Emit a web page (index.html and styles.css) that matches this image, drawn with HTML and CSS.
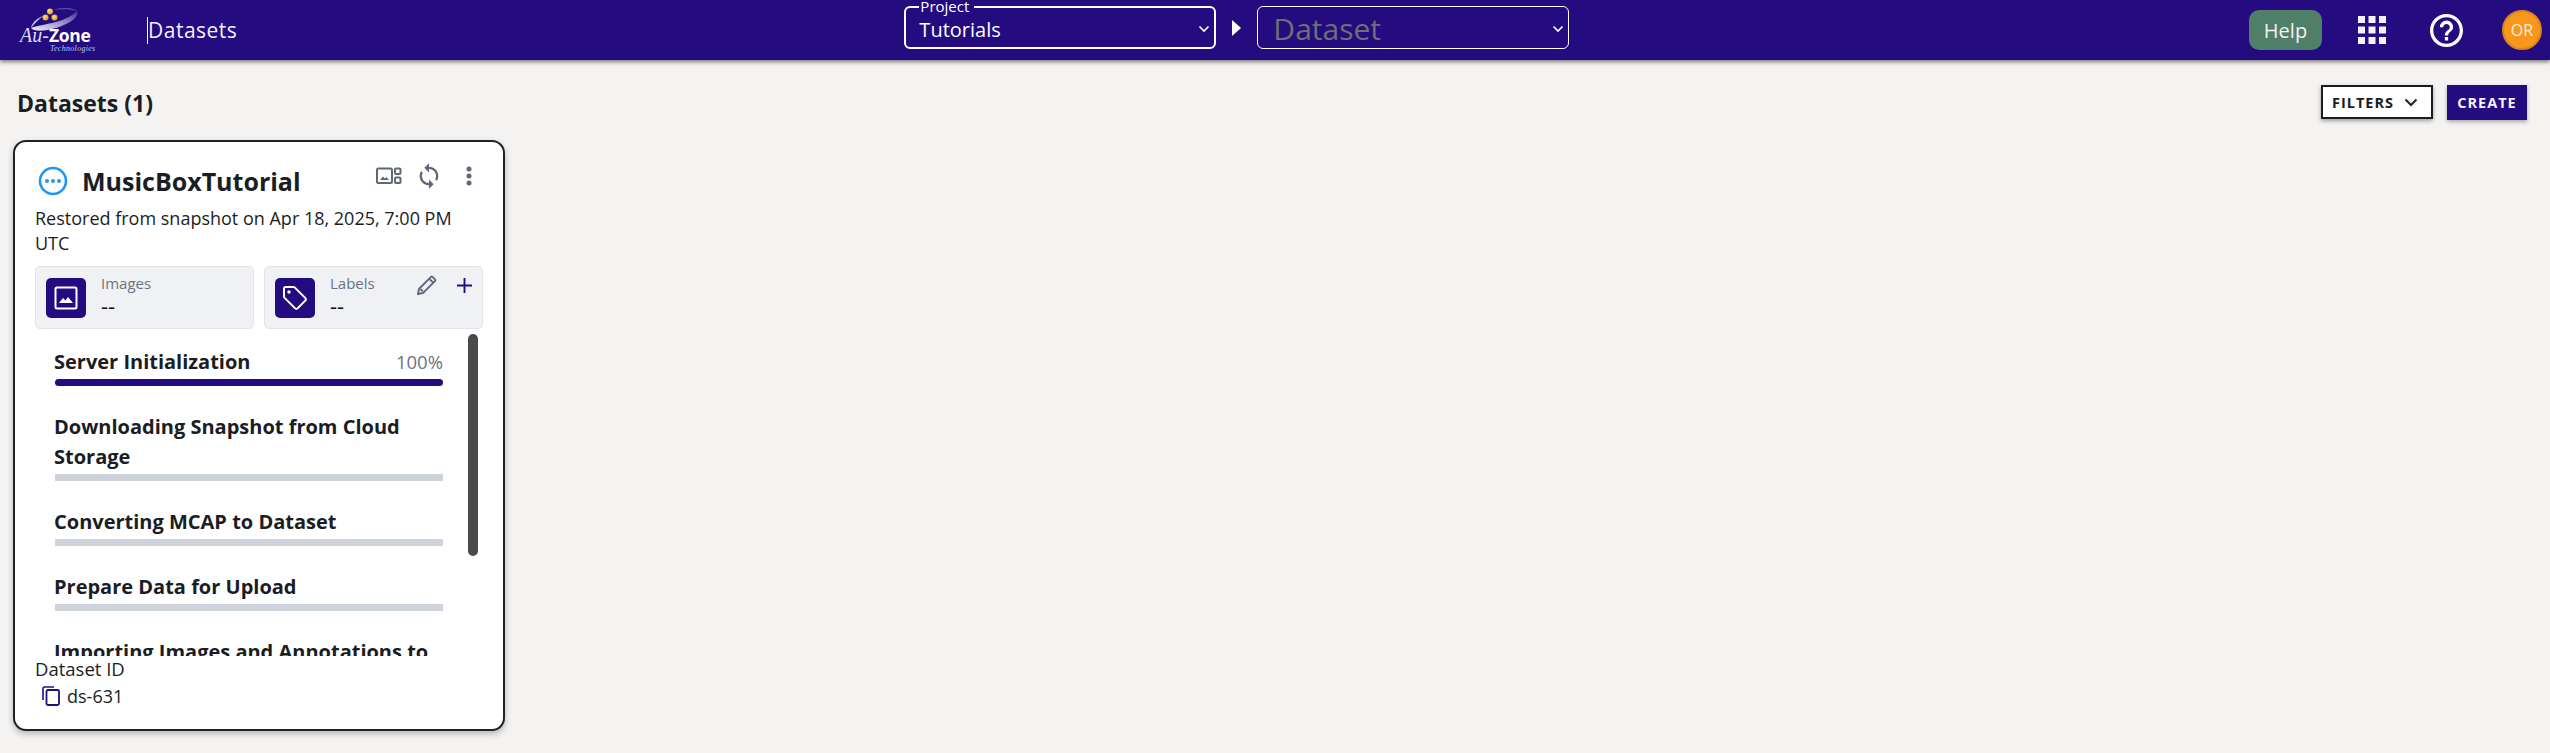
FILE: index.html
```html
<!DOCTYPE html>
<html lang="en">
<head>
<meta charset="utf-8">
<title>Datasets</title>
<link rel="stylesheet" href="styles.css">
</head>
<body>
<header class="topbar">
  <div class="brand">
    <svg class="swoosh" width="56" height="28" viewBox="0 0 56 28">
      <defs>
        <linearGradient id="sw" x1="0" y1="1" x2="1" y2="0">
          <stop offset="0" stop-color="#f0eef8"/>
          <stop offset="0.6" stop-color="#8f86c4"/>
          <stop offset="1" stop-color="#3f2d94"/>
        </linearGradient>
        <radialGradient id="ball" cx="0.4" cy="0.35" r="0.7">
          <stop offset="0" stop-color="#ffe27a"/>
          <stop offset="1" stop-color="#d99a12"/>
        </radialGradient>
      </defs>
      <path d="M1 20C10 16 34 16 47 3C50 8 40 16 26 20C16 23 4 24 1 20Z" fill="url(#sw)"/>
      <path d="M1 20C2 14 8 10 13 8C8 12 4 16 1 20Z" fill="#cfcbe6"/>
      <path d="M24 2C30 -1 42 -1 47 3C40 1 32 1 24 2Z" fill="#5a4aa6"/>
      <circle cx="20" cy="3.500" r="3" fill="url(#ball)"/>
      <circle cx="15.500" cy="9.500" r="3" fill="url(#ball)"/>
      <circle cx="24.500" cy="9.500" r="3" fill="url(#ball)"/>
    </svg>
    <div class="logo-word"><span class="logo-au">Au-</span><span class="logo-zone">Zone</span></div>
    <div class="logo-tech">Technologies</div>
  </div>
  <div class="page-name">Datasets</div>
  <nav class="crumbs">
    <div class="picker picker-project">
      <span class="picker-legend">Project</span>
      <span class="picker-value">Tutorials</span>
      <svg class="chev" width="12" height="8" viewBox="0 0 12 8"><path d="M1.500 1.500L6 6l4.500-4.500" fill="none" stroke="#fff" stroke-width="1.600"/></svg>
    </div>
    <svg class="crumb-arrow" width="9" height="16" viewBox="0 0 9 16"><path d="M0 0l9 8-9 8z" fill="#fff"/></svg>
    <div class="picker picker-dataset">
      <span class="picker-placeholder">Dataset</span>
      <svg class="chev" width="12" height="8" viewBox="0 0 12 8"><path d="M1.500 1.500L6 6l4.500-4.500" fill="none" stroke="#fff" stroke-width="1.600"/></svg>
    </div>
  </nav>
  <div class="top-actions">
    <button class="help">Help</button>
    <svg class="apps" width="28" height="28" viewBox="0 0 28 28" fill="#f4f2fb">
      <rect x="0" y="0" width="7" height="7"/><rect x="10.500" y="0" width="7" height="7"/><rect x="21" y="0" width="7" height="7"/>
      <rect x="0" y="10.500" width="7" height="7"/><rect x="10.500" y="10.500" width="7" height="7"/><rect x="21" y="10.500" width="7" height="7"/>
      <rect x="0" y="21" width="7" height="7"/><rect x="10.500" y="21" width="7" height="7"/><rect x="21" y="21" width="7" height="7"/>
    </svg>
    <svg class="question" width="33" height="33" viewBox="2 2 20 20"><path fill="#fff" d="M11 18h2v-2h-2v2zm1-16C6.480 2 2 6.480 2 12s4.480 10 10 10 10-4.480 10-10S17.520 2 12 2zm0 18c-4.410 0-8-3.590-8-8s3.590-8 8-8 8 3.590 8 8-3.590 8-8 8zm0-14c-2.210 0-4 1.790-4 4h2c0-1.100.9-2 2-2s2 .9 2 2c0 2-3 1.750-3 5h2c0-2.250 3-2.500 3-5 0-2.210-1.790-4-4-4z"/></svg>
    <div class="avatar">OR</div>
  </div>
</header>

<main class="content">
  <div class="toolbar">
    <h1 class="heading">Datasets (1)</h1>
    <div class="toolbar-actions">
      <button class="btn-filters">FILTERS
        <svg width="14" height="9" viewBox="0 0 14 9"><path d="M1.500 1.500L7 7l5.500-5.500" fill="none" stroke="#1f2328" stroke-width="2"/></svg>
      </button>
      <button class="btn-create">CREATE</button>
    </div>
  </div>

  <article class="card">
    <div class="card-head">
      <svg class="status" width="30" height="30" viewBox="0 0 30 30">
        <circle cx="15" cy="15" r="13" fill="none" stroke="#2196f3" stroke-width="2.600"/>
        <circle cx="9" cy="15" r="2" fill="#2196f3"/><circle cx="15" cy="15" r="2" fill="#2196f3"/><circle cx="21" cy="15" r="2" fill="#2196f3"/>
      </svg>
      <h2 class="card-title">MusicBoxTutorial</h2>
      <div class="card-tools">
        <svg width="26" height="18" viewBox="0 0 26 18" fill="none">
          <rect x="1" y="1.500" width="15" height="14.500" rx="1.500" stroke="#5f6779" stroke-width="2"/>
          <path d="M4 13l3-3.500 2 2 1.500-1.500 2.500 3z" fill="#5f6779"/>
          <rect x="19" y="1.500" width="5.500" height="5.500" rx="1" stroke="#5f6779" stroke-width="2"/>
          <rect x="19" y="10.500" width="5.500" height="5.500" rx="1" stroke="#5f6779" stroke-width="2"/>
        </svg>
        <svg width="28" height="28" viewBox="0 0 24 24"><path fill="#5f6779" d="M12 4V1L8 5l4 4V6c3.310 0 6 2.690 6 6 0 1.010-.25 1.970-.7 2.800l1.460 1.460C19.540 15.030 20 13.570 20 12c0-4.420-3.580-8-8-8zm0 14c-3.310 0-6-2.690-6-6 0-1.010.25-1.970.7-2.800L5.240 7.740C4.460 8.970 4 10.430 4 12c0 4.420 3.580 8 8 8v3l4-4-4-4v3z"/></svg>
        <svg class="tool-more" width="6" height="20" viewBox="0 0 6 20" fill="#5f6779"><circle cx="3" cy="3" r="2.500"/><circle cx="3" cy="10" r="2.500"/><circle cx="3" cy="17" r="2.500"/></svg>
      </div>
    </div>
    <p class="card-desc">Restored from snapshot on Apr 18, 2025, 7:00 PM UTC</p>
    <div class="stats">
      <div class="stat">
        <div class="stat-icon">
          <svg width="24" height="24" viewBox="0 0 24 24" fill="none"><rect x="1.500" y="1.500" width="21" height="21" rx="1.500" stroke="#fff" stroke-width="2"/><path d="M5 17l4-5 2.500 2.500L14 11l5 6z" fill="#fff"/></svg>
        </div>
        <div class="stat-text"><span class="stat-label">Images</span><span class="stat-value">--</span></div>
      </div>
      <div class="stat">
        <div class="stat-icon">
          <svg width="26" height="26" viewBox="0 0 26 26" fill="none"><path d="M2 3.500C2 2.700 2.700 2 3.500 2h8c.6 0 1 .2 1.400.6l10.500 10.500c.7.7.7 1.700 0 2.400l-7.900 7.900c-.7.7-1.700.7-2.400 0L2.600 12.900C2.200 12.500 2 12.100 2 11.500z" stroke="#fff" stroke-width="2"/><circle cx="7" cy="7" r="1.700" fill="#fff"/></svg>
        </div>
        <div class="stat-text"><span class="stat-label">Labels</span><span class="stat-value">--</span></div>
        <div class="stat-tools">
          <svg width="20" height="20" viewBox="0 0 21 21"><path d="M1 20l1.200-5.500L14.500 2.200c.6-.6 1.500-.6 2.100 0l2.200 2.200c.6.6.6 1.500 0 2.100L6.500 18.800zM3.800 15l2.200 2.200M13 4l4 4" fill="none" stroke="#5f6779" stroke-width="2"/></svg>
          <svg width="15" height="15" viewBox="0 0 16 16"><path d="M8 0v16M0 8h16" stroke="#240b80" stroke-width="2"/></svg>
        </div>
      </div>
    </div>
    <div class="steps-wrap">
      <div class="steps">
        <div class="step">
          <div class="step-row"><span class="step-name">Server Initialization</span><span class="step-pct">100%</span></div>
          <div class="bar bar-done"></div>
        </div>
        <div class="step">
          <div class="step-row"><span class="step-name">Downloading Snapshot from Cloud Storage</span></div>
          <div class="bar"></div>
        </div>
        <div class="step">
          <div class="step-row"><span class="step-name">Converting MCAP to Dataset</span></div>
          <div class="bar"></div>
        </div>
        <div class="step">
          <div class="step-row"><span class="step-name">Prepare Data for Upload</span></div>
          <div class="bar"></div>
        </div>
        <div class="step">
          <div class="step-row"><span class="step-name">Importing Images and Annotations to Dataset</span></div>
          <div class="bar"></div>
        </div>
      </div>
      <div class="thumb"></div>
    </div>
    <div class="card-foot">
      <div class="foot-label">Dataset ID</div>
      <div class="foot-id">
        <svg width="18" height="20" viewBox="0 0 18 20" fill="none"><path d="M1 14V2.500C1 1.700 1.700 1 2.500 1H12" stroke="#240b80" stroke-width="1.600"/><rect x="4.500" y="4" width="12.500" height="15" rx="1.500" stroke="#240b80" stroke-width="1.800"/></svg>
        <span>ds-631</span>
      </div>
    </div>
  </article>
</main>
</body>
</html>
```
FILE: styles.css
```css
* { box-sizing: border-box; }
html, body { margin: 0; height: 100%; }
body {
  background: #f4f3f1;
  font-family: "Open Sans", sans-serif;
  color: #1a1d24;
  overflow: hidden;
}
.topbar {
  height: 60px;
  background: #240b80;
  box-shadow: 0 2px 4px rgba(0, 0, 0, 0.5);
  display: flex;
  align-items: center;
  position: relative;
  color: #fff;
}
.brand {
  width: 147px;
  height: 60px;
  padding: 8px 0 0 30px;
  position: relative;
  flex: none;
}
.swoosh { display: block; }
.logo-word {
  position: absolute;
  left: 20px;
  top: 26px;
  white-space: nowrap;
  line-height: 18px;
}
.logo-au { font: italic 20px/18px "Liberation Serif", serif; color: #dcdaf0; }
.logo-zone { font: bold 17.500px/18px "Open Sans", sans-serif; letter-spacing: -0.3px; color: #fff; }
.logo-tech {
  position: absolute;
  left: 50px;
  top: 44px;
  font: italic 8px/9px "Liberation Serif", serif;
  letter-spacing: 0.3px;
  color: #c9c6e4;
}
.page-name {
  border-left: 1px solid #fff;
  height: 27px;
  line-height: 27px;
  font-size: 21px;
  letter-spacing: 0.5px;
  color: #f2f0fb;
  flex: none;
}
.crumbs {
  display: flex;
  align-items: center;
  margin: -5px 0 0 667px;
  gap: 16px;
  flex: none;
}
.picker {
  position: relative;
  height: 43px;
  width: 312px;
  border: 2px solid #fff;
  border-radius: 6px;
  display: flex;
  align-items: center;
  justify-content: space-between;
  padding: 0 4px 0 13px;
}
.picker-dataset { border-width: 1px; padding-left: 15px; }
.picker-legend {
  position: absolute;
  left: 13px;
  top: -10px;
  background: #240b80;
  padding: 0 5px 0 1px;
  font-size: 15px;
  line-height: 16px;
}
.picker-value { font-size: 20px; line-height: 26px; padding-top: 5px; }
.picker-placeholder { font-size: 30px; line-height: 36px; color: #6e6e74; margin-top: 2px; }
.chev { flex: none; margin-top: 2px; }
.top-actions {
  margin-left: auto;
  padding-right: 8px;
  display: flex;
  align-items: center;
  flex: none;
}
.help {
  width: 73px;
  height: 40px;
  border: 0;
  border-radius: 10px;
  background: #4f7f68;
  color: #f2f2f2;
  font: 20px "Open Sans", sans-serif;
  margin-right: 36px;
  padding: 0;
}
.apps { margin-right: 44px; }
.question { margin-right: 39px; }
.avatar {
  width: 40px;
  height: 40px;
  border-radius: 50%;
  background: #f7981d;
  border: 2px solid #d9851b;
  font-size: 16px;
  display: flex;
  align-items: center;
  justify-content: center;
  color: #fbeedd;
}
.content { padding: 25px 23px 0 13px; }
.toolbar {
  display: flex;
  align-items: center;
  justify-content: space-between;
  height: 35px;
}
.heading {
  margin: 0 0 0 4px;
  font-size: 23px;
  font-weight: 700;
  line-height: 34px;
}
.toolbar-actions { display: flex; gap: 14px; }
.btn-filters {
  width: 112px;
  height: 34px;
  background: #fff;
  border: 2px solid #1c1c1c;
  box-shadow: 0 2px 4px rgba(0, 0, 0, 0.35);
  font: 700 14.500px "Open Sans", sans-serif;
  letter-spacing: 1px;
  color: #1a1d24;
  display: flex;
  align-items: center;
  justify-content: center;
  gap: 10px;
  padding: 0 4px 0 0;
}
.btn-create {
  width: 80px;
  height: 35px;
  background: #240b80;
  border: 0;
  box-shadow: 0 2px 4px rgba(0, 0, 0, 0.3);
  color: #f4f2fb;
  font: 700 14.500px "Open Sans", sans-serif;
  letter-spacing: 1px;
  padding: 0;
}
.card {
  margin-top: 20px;
  width: 492px;
  height: 591px;
  background: #fff;
  border: 2px solid #1f2329;
  border-radius: 13px;
  box-shadow: 0 3px 6px rgba(0, 0, 0, 0.25);
  padding: 0 20px;
  display: flex;
  flex-direction: column;
}
.card-head {
  display: flex;
  align-items: center;
  height: 50px;
  margin-top: 14px;
  padding-left: 3px;
}
.status { flex: none; }
.card-title {
  margin: 0 0 0 14px;
  font-size: 25px;
  font-weight: 700;
  line-height: 36px;
  flex: 1;
}
.card-tools {
  display: flex;
  align-items: center;
  gap: 13px;
  padding-right: 11px;
  margin-top: -11px;
}
.tool-more { margin-left: 10px; }
.card-desc {
  margin: 0;
  font-size: 18px;
  line-height: 24.500px;
  color: #1a1d24;
}
.stats {
  display: flex;
  gap: 10px;
  margin-top: 11px;
  width: 448px;
}
.stat {
  position: relative;
  flex: 1;
  height: 63px;
  background: #f0f1f4;
  border: 1px solid #e2e4e8;
  border-radius: 5px;
  display: flex;
  align-items: center;
  padding-left: 10px;
}
.stat-icon {
  width: 40px;
  height: 40px;
  border-radius: 5px;
  background: #240b80;
  display: flex;
  align-items: center;
  justify-content: center;
  flex: none;
}
.stat-text {
  display: flex;
  flex-direction: column;
  margin: -5px 0 0 15px;
}
.stat-label { font-size: 15px; line-height: 20px; color: #6b7280; }
.stat-value { font-size: 22px; line-height: 24px; color: #111; font-weight: 500; }
.stat-tools {
  position: absolute;
  right: 10px;
  top: 8px;
  display: flex;
  align-items: center;
  gap: 20px;
}
.steps-wrap {
  position: relative;
  height: 327px;
  overflow: hidden;
}
.steps {
  padding: 18px 40px 0 19px;
  display: flex;
  flex-direction: column;
  gap: 26px;
}
.step-row {
  display: flex;
  justify-content: space-between;
  align-items: baseline;
}
.step-name {
  font-size: 20px;
  font-weight: 700;
  line-height: 30px;
}
.step-pct { font-size: 18.500px; line-height: 30px; color: #6b7280; }
.bar {
  height: 7px;
  background: #ced2da;
  margin: 2px 0 0 1px;
}
.bar-done { background: #240b80; border-radius: 4px; }
.thumb {
  position: absolute;
  right: 5px;
  top: 5px;
  width: 10px;
  height: 222px;
  border-radius: 5px;
  background: #4a4a4a;
}
.foot-label { font-size: 18.500px; line-height: 24px; margin-top: 1px; }
.foot-id {
  display: flex;
  align-items: center;
  gap: 7px;
  padding-left: 7px;
  margin-top: 3px;
  font-size: 18px;
  line-height: 24px;
}
```
